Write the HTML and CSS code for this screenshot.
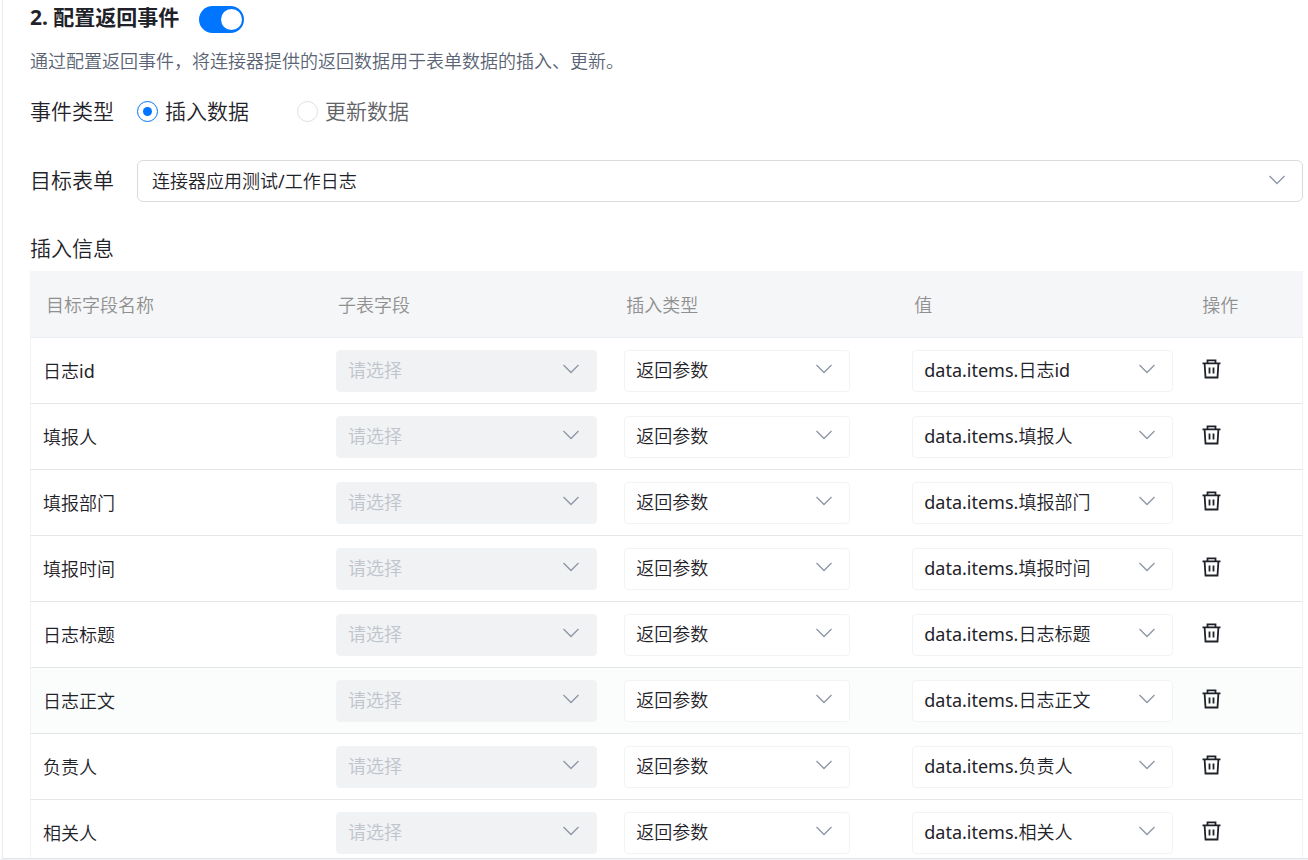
FILE: index.html
```
<!DOCTYPE html>
<html lang="zh-CN">
<head>
<meta charset="utf-8">
<meta name="viewport" content="width=device-width, initial-scale=1">
<title>配置返回事件</title>
<link rel="stylesheet" href="styles.css">
</head>
<body>
<svg class="sprite" aria-hidden="true">
  <symbol id="chevron" viewBox="0 0 18 12"><path d="M1.5 2 9 9.5 16.5 2" fill="none" stroke="currentColor" stroke-width="1.4"/></symbol>
  <symbol id="trash" viewBox="0 0 20 22"><path d="M5.5 5V2.3h8V5M.5 5.3h18M2.6 5.5l.9 14h12l.9-14M7.5 9.5v6M11.5 9.5v6" fill="none" stroke="currentColor" stroke-width="1.8"/></symbol>
</svg>
<main class="panel">
  <header class="title-row">
    <h1 class="title" id="event-title">2. 配置返回事件</h1>
    <input class="switch" type="checkbox" role="switch" aria-labelledby="event-title" checked>
  </header>
  <p class="description">通过配置返回事件，将连接器提供的返回数据用于表单数据的插入、更新。</p>

  <div class="form-row type-row" role="radiogroup" aria-labelledby="type-label">
    <span class="form-label" id="type-label">事件类型</span>
    <div class="radios">
      <label class="radio"><input type="radio" name="type" checked>插入数据</label>
      <label class="radio"><input type="radio" name="type">更新数据</label>
    </div>
  </div>

  <div class="form-row target-row">
    <label class="form-label" for="target">目标表单</label>
    <div class="select select-target">
      <select id="target"><option>连接器应用测试/工作日志</option></select>
      <svg class="chevron" aria-hidden="true"><use href="#chevron"/></svg>
    </div>
  </div>

  <h2 class="subtitle" id="fields-title">插入信息</h2>
  <table class="fields" aria-labelledby="fields-title">
    <colgroup><col class="col-name"><col class="col-data"><col class="col-data"><col class="col-data"><col></colgroup>
    <thead>
      <tr><th>目标字段名称</th><th>子表字段</th><th>插入类型</th><th>值</th><th>操作</th></tr>
    </thead>
    <tbody id="rows"></tbody>
  </table>
</main>
<script src="script.js"></script>
</body>
</html>
```
FILE: script.js
```
const fields = ["日志id", "填报人", "填报部门", "填报时间", "日志标题", "日志正文", "负责人", "相关人"];
const activeField = "日志正文";

const select = (label, value, disabled) => `
  <div class="select">
    <select aria-label="${label}"${disabled ? " disabled" : ""}><option>${value}</option></select>
    <svg class="chevron" aria-hidden="true"><use href="#chevron"/></svg>
  </div>`;

document.getElementById("rows").innerHTML = fields.map(name => `
  <tr${name === activeField ? ' class="active"' : ""}>
    <td>${name}</td>
    <td>${select(name + " 子表字段", "请选择", true)}</td>
    <td class="cell-type">${select(name + " 插入类型", "返回参数", false)}</td>
    <td>${select(name + " 值", "data.items." + name, false)}</td>
    <td class="cell-action"><button class="delete" type="button" aria-label="删除 ${name}"><svg class="trash" aria-hidden="true"><use href="#trash"/></svg></button></td>
  </tr>`).join("");
```
FILE: styles.css
```
* { box-sizing: border-box; }

body {
  margin: 0;
  height: 100vh;
  display: flex;
  flex-direction: column;
  background: #f1f2f5;
  color: #1f2329;
  font-family: "Noto Sans", "Noto Sans CJK SC DemiLight", "Noto Sans CJK SC", sans-serif;
  font-size: 18px;
  padding-bottom: 1px;
}

.sprite { display: none; }

.panel {
  flex: 1;
  min-height: 0;
  overflow: hidden;
  padding: 3px 5px 0 27px;
  border-left: 1px solid #ebebef;
  border-bottom: 1px solid #e2e4e8;
  box-shadow: -2px 0 #fff;
  margin-left: 2px;
  background: #fff;
}

.title-row {
  display: flex;
  align-items: center;
  gap: 20px;
  height: 32px;
}

.title {
  margin: 0;
  padding-bottom: 4px;
  font-family: "Noto Sans", "Noto Sans CJK SC", sans-serif;
  font-size: 21px;
  line-height: 28px;
  font-weight: 700;
}

.switch {
  appearance: none;
  display: flex;
  align-items: center;
  justify-content: flex-end;
  width: 45px;
  height: 27px;
  margin: 0;
  padding: 2px;
  border-radius: 14px;
  background: #0075ff;
}

.switch::before {
  content: "";
  width: 21px;
  height: 21px;
  border-radius: 50%;
  background: #fff;
}

.switch:not(:checked) {
  justify-content: flex-start;
  background: #c0c4cc;
}

.description {
  margin: 12px 0 0;
  line-height: 28px;
  color: #5a6475;
}

.form-row {
  display: flex;
  align-items: center;
  gap: 23px;
}

.type-row { margin-top: 20px; }
.target-row { margin-top: 33px; }

.form-label,
.radio,
.subtitle {
  font-size: 21px;
  line-height: 32px;
  font-weight: 400;
}

.target-row .form-label { padding-bottom: 2px; }

.radios {
  display: flex;
  gap: 48px;
}

.radio {
  display: flex;
  align-items: center;
  gap: 7px;
  color: #606266;
}

.radio:has(:checked) { color: #1f2329; }

.radio input {
  appearance: none;
  display: grid;
  place-items: center;
  width: 21px;
  height: 21px;
  margin: 0;
  border: 1px solid #dcdfe6;
  border-radius: 50%;
}

.radio input:checked { border-color: #0075ff; }

.radio input:checked::before {
  content: "";
  width: 9px;
  height: 9px;
  border-radius: 50%;
  background: #0075ff;
}

.select {
  display: grid;
  align-items: center;
}

.select > * { grid-area: 1 / 1; }

.select select {
  appearance: none;
  width: 100%;
  height: 42px;
  padding: 0 44px 1px 11px;
  border: 1px solid #f2f3f5;
  border-radius: 4px;
  background: #fff;
  color: #1f2329;
  font: inherit;
}

.select select:disabled {
  border-color: #f2f3f5;
  background: #f1f2f4;
  color: #c0c4cc;
  opacity: 1;
}

.select-target { flex: 1; }

.select-target select {
  padding-left: 14px;
  border-color: #d9dbdf;
  border-radius: 6px;
}

.chevron {
  justify-self: end;
  width: 18px;
  height: 12px;
  margin: 0 17px 3px 0;
  color: #8f98a8;
  pointer-events: none;
}

.subtitle { margin: 30px 0 7px; }

.fields {
  width: 100%;
  table-layout: fixed;
  border-collapse: separate;
  border-spacing: 0;
}

.col-name { width: 23.1%; }
.col-data { width: 22.63%; }

.fields th {
  height: 67px;
  padding: 0 14px;
  border-bottom: 1px solid #ebeef2;
  background: #f5f6f8;
  color: #909090;
  font-weight: 400;
  text-align: left;
}

.fields th:first-child { padding-left: 16px; }

.fields td {
  height: 66px;
  padding: 0 15px 0 12px;
  border-bottom: 1px solid #e4e7e9;
}

.fields td:first-child {
  padding-bottom: 2px;
  border-left: 1px solid #f2f3f5;
}

.fields td:last-child { border-right: 1px solid #f2f3f5; }
.fields .cell-type { padding-right: 50px; }
.fields .cell-action { padding-left: 14px; }
.fields .active td { background: #fbfdfc; }

.delete {
  display: block;
  margin: 0 0 4px;
  padding: 0;
  border: 0;
  background: none;
  color: #1f2329;
}

.trash {
  display: block;
  width: 20px;
  height: 22px;
}
```
